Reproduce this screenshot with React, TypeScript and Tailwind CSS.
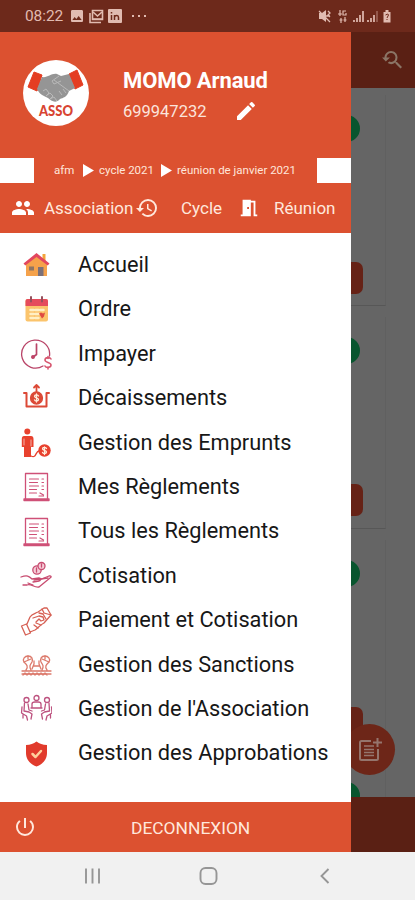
import React from "react";
import {
  MdEdit, MdGroup, MdHistory, MdImage, MdMeetingRoom, MdPowerSettingsNew, MdYoutubeSearchedFor,
} from "react-icons/md";

type Kids = { children: React.ReactNode };

function Line({ children, color = "#c94a6a" }: Kids & { color?: string }) {
  return (
    <svg viewBox="0 0 32 32" className="h-8 w-8 shrink-0" fill="none" stroke={color} strokeWidth="1.3" strokeLinecap="round" strokeLinejoin="round">
      {children}
    </svg>
  );
}

const House = () => (
  <Line color="none">
    <path d="M22.500 5h3v8h-3z" fill="#f2a43c" />
    <path d="M6 14 16.500 6l10.500 8v13H6z" fill="#f5a24b" />
    <path d="M3.500 14.500 16.500 4l13 10.500-1.800 2L16.500 8 5.300 16.500z" fill="#e2475f" />
    <path d="M18 18h5.500v9H18z" fill="#7c7078" />
    <path d="M9 17.500h5v4H9z" fill="#8d7565" />
  </Line>
);

const Calendar = () => (
  <Line color="none">
    <rect x="5.500" y="5" width="22.500" height="22.500" rx="2" fill="#fbc46c" />
    <path d="M5.500 12V7q0-2 2-2H26q2 0 2 2v5z" fill="#e54c5c" />
    <path d="M11 3v4.500M22 3v4.500" stroke="#96505c" strokeWidth="2" />
    <path d="M10.500 16h3M15.500 16h3M20.500 16h3M10.500 20h3M15.500 20h3M10.500 24h3M15.500 24h3" stroke="#fff0c5" strokeWidth="2.500" />
    <path d="m19 19.500 2-1 2 1 2-1-1 4-2 2z" fill="#df4b42" />
  </Line>
);

const Clock = () => (
  <Line color="#b94468">
    <path d="M29.500 18A14 14 0 1 0 23 28M29.500 18a14 14 0 0 0 0-4" />
    <path d="M16.500 6v10.500l-4 3" strokeWidth="1.700" />
    <circle cx="13" cy="19" r="1.300" fill="#d64160" />
    <path d="M31 21c-1-2-6-2-6 1s6 2 6 5-5 3-6 1M28 18.500v2M28 29v2" stroke="#d75870" strokeWidth="1.600" />
  </Line>
);

const CashOut = () => (
  <Line color="#dc4936">
    <path d="M4 11h2.500v13.500h20V11H29" strokeWidth="2" />
    <circle cx="16.500" cy="16" r="6" fill="#dc4936" />
    <path d="M16.500 11V3M14 5.500 16.500 3 19 5.500" strokeWidth="1.800" />
    <path d="M18.500 14c-.5-1.500-4-1.500-4 .3s4 1.500 4 3.300-3.500 1.800-4 .3M16.500 12v8" stroke="#fff0df" strokeWidth="1.300" />
  </Line>
);

const Borrower = () => (
  <Line color="#e8412e">
    <circle cx="7.300" cy="4.500" r="3" fill="#e8412e" stroke="none" />
    <path d="M4 9h7q2.500 0 2.500 3v8h-2.500v10H4V20H1.800v-8Q1.800 9 4 9z" fill="#e8412e" stroke="none" />
    <path d="M4 12v6M11 13v6" stroke="#fff" strokeWidth=".6" />
    <path d="M11 29c6 3 4-6 9-5" />
    <circle cx="24.500" cy="23.500" r="6.200" fill="#e8412e" stroke="none" />
    <path d="M26.500 21.500c-.5-1.500-4-1.500-4 .3s4 1.500 4 3.300-3.500 1.800-4 .3M24.500 20v7.500" stroke="#fff0df" strokeWidth="1.300" />
  </Line>
);

const Receipt = () => (
  <Line color="#cf5077">
    <path d="M5.500 28V2.500h22V28M4 28h25v1.500H4z" />
    <path d="M9.500 8h9M9.500 11.500h8M9.500 15h9M9.500 18.500h7M22 8h1.500M22 11.500h1.500M22 15h1.500M22 18.500h1.500M9.500 22h7M20 22l3.500 2M19 25h4.500" strokeWidth="1.200" />
  </Line>
);

const Donate = () => (
  <Line color="#c84c70">
    <circle cx="17" cy="10" r="4.200" fill="#f5cdd8" />
    <circle cx="21.500" cy="6" r="3.500" fill="#f5cdd8" />
    <path d="M16.500 8v4M21.500 4v3" />
    <path d="M1 17c6-2 8-1 11 2l7-1c2 0 2 3 0 3l-6 1M19 20l10-4c2-.5 3 1 1 2L19 27c-5 1-8-4-12-2H3" />
    <path d="m14 20 14-2M8 23l5 2" />
  </Line>
);

const Payment = () => (
  <Line color="#d66054">
    <path d="m1.500 21 5-2 4 9-5 2zM7 19l3-7c2-3 4-3 8-5l6-4 3 0 4 7-7 8c-4 2-6 5-9 7l-5 2" />
    <path d="m13 13 6-2 4 1 1 3-3 1-2-2-3 3M22 4l2 4 7 2M19 8l4 1 3 5M16 18l5 2M14 20l4 3" />
  </Line>
);

const Sanctions = () => (
  <Line color="#dc7a6c">
    <path d="M2 25h29M2 22h29M6 21c3-4 0-6-2-8-2-3 1-6 4-6 4 0 5 3 4 6-2 3-3 4-1 8M27 21c-3-4 0-6 2-8 2-3-1-6-4-6-4 0-5 3-4 6 2 3 3 4 1 8" />
    <path d="m4 13 7-3M29 13l-7-3M14 12v3l-2 5M19 12v3l2 5M14 17h5M8 7v3M25 7v3M3 26l2-2 2 2 2-2 2 2 2-2 2 2 2-2 2 2 2-2 2 2 2-2 2 2" />
  </Line>
);

const Meeting = () => (
  <Line color="#bd527f">
    <circle cx="6.500" cy="7" r="2.500" /><circle cx="16.500" cy="5" r="2.500" /><circle cx="27" cy="7" r="2.500" />
    <path d="M12 14v-3q0-2 3-2h3q3 0 3 2v3M11 15h11M4.500 10 4 18l5 1 3 2-1 5M8 11l1 6 3 1M2 14l-.5 6 5 3 1 4M29 10l.5 8-5 1-3 2 1 5M25.500 11l-1 6-3 1M31.500 14l.5 6-5 3-1 4M3 22v3M30.500 22v3" />
  </Line>
);

const Shield = () => (
  <Line color="none">
    <path d="M16.500 3.500c3 2.500 6 3.200 10.500 3.500v8c0 7-5 11.500-10.500 13.500C11 26.500 6 22 6 15V7c4.500-.3 7.500-1 10.500-3.500z" fill="#e13b2c" />
    <path d="m12.500 16 3 3 5.500-6" stroke="#ffd09c" strokeWidth="2.500" />
  </Line>
);

const menu = [
  { label: "Accueil", Icon: House },
  { label: "Ordre", Icon: Calendar },
  { label: "Impayer", Icon: Clock },
  { label: "Décaissements", Icon: CashOut },
  { label: "Gestion des Emprunts", Icon: Borrower },
  { label: "Mes Règlements", Icon: Receipt },
  { label: "Tous les Règlements", Icon: Receipt },
  { label: "Cotisation", Icon: Donate },
  { label: "Paiement et Cotisation", Icon: Payment },
  { label: "Gestion des Sanctions", Icon: Sanctions },
  { label: "Gestion de l'Association", Icon: Meeting },
  { label: "Gestion des Approbations", Icon: Shield },
];

function Logo() {
  return (
    <svg viewBox="0 0 66 66" className="h-[66px] w-[66px] shrink-0">
      <circle cx="33" cy="33" r="33" fill="#fff" />
      <path d="m11 12 8 3-5 16-9-4zM46 14l8-4 6 15-8 4z" fill="#e43d22" stroke="#e43d22" strokeWidth="1" strokeLinejoin="round" />
      <path d="M19 17c6 1 9-4 15-3l4 2 8-2 6 14-6 3c-2 6-6 7-9 8-4 5-9 2-12-1-4-2-8-3-11-9z" fill="#959595" />
      <path d="m31 20 15 11M20 31l3-2 3 4-3 3 4-3 3 3-3 3 4-2 3 4M36 16l-7 5 2 3 7-3M40 29l3 4M36 31l3 4" fill="none" stroke="#b9b9b9" strokeWidth="1" />
      <text x="16" y="55.500" textLength="34" lengthAdjust="spacingAndGlyphs" fontFamily="Lato, sans-serif" fontWeight="900" fontSize="15.500" fill="#d84432">ASSO</text>
    </svg>
  );
}

function StatusBar() {
  return (
    <div className="flex h-8 shrink-0 items-center bg-[#6d291b] pl-[25px] text-[#e1bbb1]">
      <span className="w-[44px] pt-[2px] text-[15.500px] leading-none tracking-[-0.100px]">08:22</span>
      <MdImage className="h-[16px] w-[16px]" />
      <svg viewBox="0 0 15 15" className="ml-1 h-[15px] w-[15px]" fill="none" stroke="currentColor" strokeWidth="1.600">
        <path d="M1 4v9.500h11M3.500 1.500h10v9h-10z" /><path d="m4 3 4.500 4L13 3M4 10h9" />
      </svg>
      <svg viewBox="0 0 14 14" className="ml-[4px] h-[14px] w-[14px]">
        <rect width="14" height="14" rx="1" fill="currentColor" />
        <path d="M3.500 6v5M3.500 3v1.500M6.500 11V6m0 2c1-2 4-2 4 .5V11" fill="none" stroke="#6d291b" strokeWidth="1.500" />
      </svg>
      <div className="ml-[10px] flex gap-[4px]">
        <i className="h-[2px] w-[2px] bg-current" /><i className="h-[2px] w-[2px] bg-current" /><i className="h-[2px] w-[2px] bg-current" />
      </div>
      <svg viewBox="0 0 74 16" className="ml-auto mr-[23px] h-4 w-[74px]" fill="none" stroke="currentColor">
        <path d="M1 5h3l4-3v12l-4-3H1z" fill="currentColor" stroke="none" />
        <path d="m1 3 11 11M10 3l2 2-2 2 2 2M8 8h4" strokeWidth="1.300" />
        <path d="M22 2v6M20 6h4M28 3h-3v4h3V5M23 10v5M21.500 12h3M27 9v5M25.500 12h3" strokeWidth="1.200" />
        <path d="M36 14v-2M39 14v-4M42 14V7M45 14V3M50 14v-2M53 14v-4M56 14V7" strokeWidth="1.700" />
        <path d="M59 14V3" strokeWidth="1.200" opacity=".55" />
        <path d="M65.500 4h2V2h3v2h2v10.500h-7z" fill="currentColor" stroke="none" />
        <path d="M67.500 7q3-2 3 0l-1.500 3m0 1v1" stroke="#6d291b" />
      </svg>
    </div>
  );
}

const Triangle = () => (
  <svg viewBox="0 0 11 13" className="h-[13px] w-[11px] shrink-0"><path d="M0 0 11 6.500 0 13z" fill="#fff" /></svg>
);

function Drawer() {
  return (
    <aside className="flex w-[351px] shrink-0 flex-col bg-white">
      <header className="flex h-[201px] flex-col bg-[#dc5130] text-white">
        <div className="flex h-[125px] pl-[23px] pt-[28px]">
          <Logo />
          <div className="ml-[34px] pt-[7px]">
            <div className="h-[28px] whitespace-nowrap text-[22px] font-bold leading-[28px] tracking-[-0.100px]">MOMO Arnaud</div>
            <div className="flex h-[32px] items-center text-[16.500px] text-[#fbe4dc]">
              <span className="w-[111px] pt-[3px]">699947232</span>
              <MdEdit className="-mt-px h-6 w-6 text-white" />
            </div>
          </div>
        </div>
        <div className="flex h-[26px] items-center whitespace-nowrap text-[11.500px] text-[#ffe6db]">
          <div className="h-[25px] w-[34px] shrink-0 bg-white" />
          <span className="ml-[20px] w-[29px] pt-px">afm</span>
          <Triangle />
          <span className="ml-[5px] w-[62px] pt-px">cycle 2021</span>
          <Triangle />
          <span className="ml-[5px] pt-px">réunion de janvier 2021</span>
          <div className="ml-auto h-[25px] w-[34px] shrink-0 bg-white" />
        </div>
        <nav className="flex h-[50px] items-center whitespace-nowrap pl-[11px] text-[17px] text-[#ffe8dd]">
          <MdGroup className="h-6 w-6 shrink-0 text-white" />
          <span className="ml-[9px] w-[91px] pt-[2px]">Association</span>
          <MdHistory className="h-6 w-6 shrink-0" />
          <span className="ml-[22px] w-[57px] pt-[2px]">Cycle</span>
          <MdMeetingRoom className="h-[22px] w-[22px] shrink-0 text-white" />
          <span className="ml-[14px] pt-[2px]">Réunion</span>
        </nav>
      </header>
      <ul className="mt-[10px] grid h-[533px] grid-rows-12">
        {menu.map(({ label, Icon }) => (
          <li key={label} className="flex items-center whitespace-nowrap pl-[20px] text-[21.750px] text-[#171717]">
            <Icon />
            <span className="ml-[26px]">{label}</span>
          </li>
        ))}
      </ul>
      <button className="mt-auto flex h-[50px] items-center bg-[#dc5130] pl-[13px] text-[17.400px] text-[#ffe8dd]">
        <MdPowerSettingsNew className="h-6 w-6" />
        <span className="ml-[94px] pt-[3px]">DECONNEXION</span>
      </button>
    </aside>
  );
}

function DimmedPage() {
  return (
    <main className="relative flex flex-1 flex-col overflow-hidden bg-[#656565]">
      <div className="flex h-14 shrink-0 items-center justify-end bg-[#5a2014] pr-[11px]">
        <MdYoutubeSearchedFor className="h-6 w-6 text-[#8b7566]" />
      </div>
      <div className="flex min-h-0 flex-1 flex-col gap-[11px] overflow-hidden pt-[7px]">
        {[0, 1, 2, 3].map((n) => (
          <div key={n} className="flex h-[211.300px] w-[35px] shrink-0 flex-col border-r border-b border-r-[#606060] border-b-[#575757] pt-[20px]">
            <div className="-ml-[18px] h-[27px] w-[27px] rounded-full bg-[#08552e]" />
            <div className="-ml-4 mt-[120px] h-8 w-[28px] rounded-[7px] bg-[#662216]" />
          </div>
        ))}
      </div>
      <div className="h-[55px] shrink-0 bg-[#5a2014]" />
      <div className="absolute bottom-[77px] left-[-7px] flex h-[51px] w-[51px] items-center justify-center rounded-full bg-[#6d2618]">
        <svg viewBox="0 0 26 26" className="h-[26px] w-[26px]" fill="none" stroke="#95756d" strokeWidth="2">
          <path d="M14 4H4.500Q3 4 3 5.500v16Q3 23 4.500 23h15q1.500 0 1.500-1.500V12M20.500 1v9M16 5.500h9" />
          <path d="M7 9h10M7 12.500h10M7 15.500h10M7 18.500h10" strokeWidth="1.700" />
        </svg>
      </div>
    </main>
  );
}

export default function App() {
  return (
    <div className="flex h-[900px] w-[415px] flex-col overflow-hidden font-['Roboto',sans-serif]">
      <StatusBar />
      <div className="flex h-[820px] shrink-0"><Drawer /><DimmedPage /></div>
      <div className="flex h-12 shrink-0 items-center bg-[#f1f1f1]">
        <svg viewBox="0 0 415 48" className="h-12 w-full" fill="none" stroke="#969696" strokeWidth="1.900">
          <path d="M86 16.500v15M92.500 16.500v15M99 16.500v15" />
          <rect x="200.500" y="16" width="16" height="16" rx="5" />
          <path d="m328.500 17-7 7 7 7" />
        </svg>
      </div>
    </div>
  );
}
